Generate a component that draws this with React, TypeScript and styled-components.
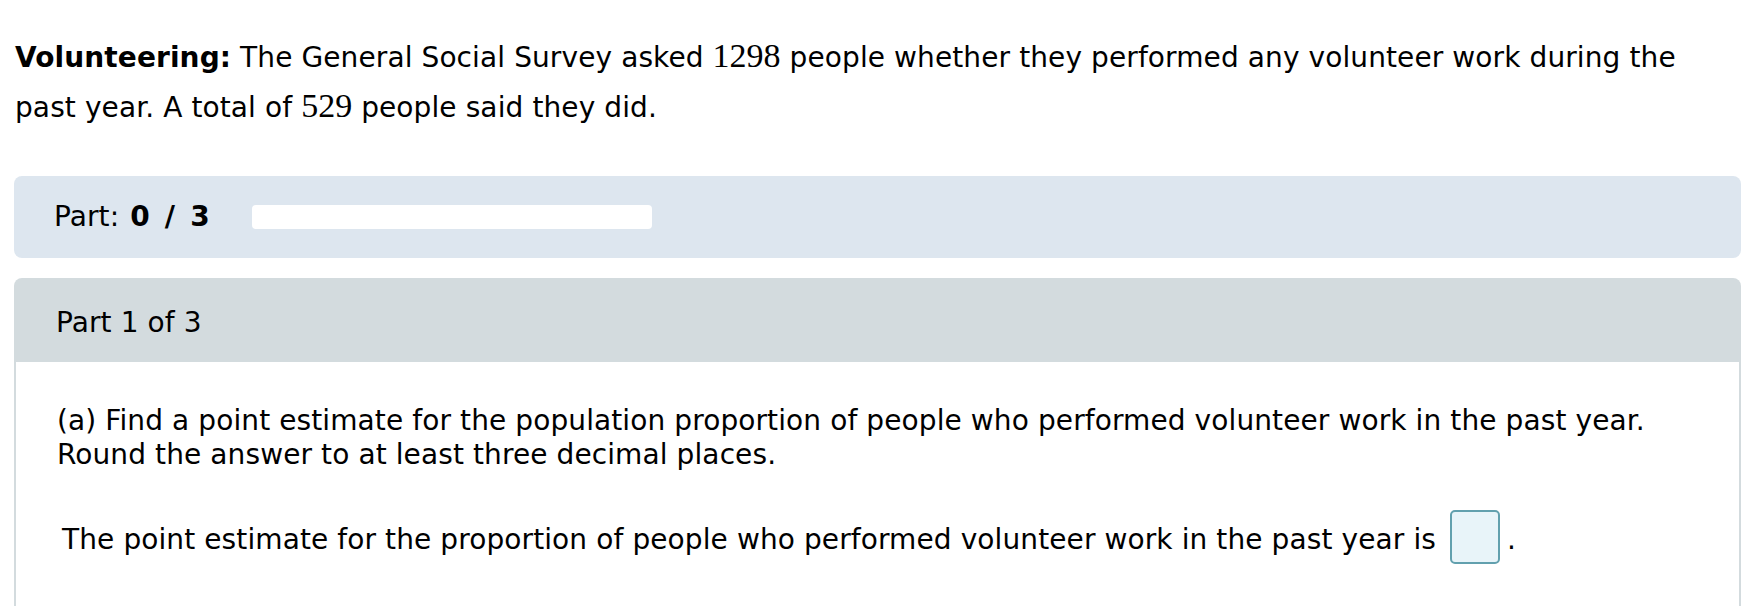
import React from "react";
import styled, { createGlobalStyle } from "styled-components";

const Global = createGlobalStyle`
  html, body { margin: 0; padding: 0; background: #ffffff; }
  body { font-family: "DejaVu Sans", Verdana, sans-serif; color: #000; letter-spacing: 0.1px; }
`;

const Page = styled.div`
  padding: 33px 17px 0 14px;
  font-size: 28px;
`;

const Intro = styled.p`
  margin: 0;
  line-height: 50px;
  padding-left: 1px;
`;

const Num = styled.span`
  font-family: "Liberation Serif", "Times New Roman", serif;
  font-size: 34px;
  line-height: 0;
  letter-spacing: 0;
`;

const ProgressPanel = styled.div`
  margin-top: 43px;
  height: 82px;
  background: #dde6ef;
  border-radius: 8px;
  display: flex;
  align-items: center;
  padding-left: 40px;
`;

const Label = styled.span`
  line-height: 1;
`;

const Score = styled.b`
  margin-left: 2px;
`;

const Slash = styled.span`
  margin: 0 15px;
`;

const Bar = styled.div`
  margin-left: 42px;
  width: 400px;
  height: 24px;
  background: #ffffff;
  border-radius: 4px;
`;

const PartCard = styled.section`
  margin-top: 20px;
`;

const PartHeader = styled.div`
  box-sizing: border-box;
  height: 84px;
  padding-top: 4px;
  background: #d3dbde;
  border-radius: 8px 8px 0 0;
  display: flex;
  align-items: center;
  padding-left: 42px;
`;

const PartBody = styled.div`
  border-left: 2px solid #d3dbde;
  border-right: 2px solid #d3dbde;
  padding: 42px 40px 60px 41px;
`;

const Question = styled.p`
  margin: 0;
  line-height: 34px;
`;

const AnswerRow = styled.div`
  margin-top: 38px;
  padding-left: 5px;
  display: flex;
  align-items: center;
  line-height: 34px;
`;

const AnswerText = styled.span`
  padding-top: 6px;
`;

const AnswerBox = styled.span`
  display: inline-block;
  box-sizing: border-box;
  width: 50px;
  height: 54px;
  margin: 0 7px 0 14px;
  background: #e8f4f9;
  border: 2px solid #62a0ae;
  border-radius: 5px;
`;

export default function App() {
  return (
    <>
      <Global />
      <Page>
        <Intro>
          <b>Volunteering:</b> The General Social Survey asked <Num>1298</Num> people whether they
          performed any volunteer work during the past year. A total of <Num>529</Num> people said
          they did.
        </Intro>
        <ProgressPanel>
          <Label>
            Part:{" "}
            <Score>
              0<Slash>/</Slash>3
            </Score>
          </Label>
          <Bar />
        </ProgressPanel>
        <PartCard>
          <PartHeader>Part 1 of 3</PartHeader>
          <PartBody>
            <Question>
              (a) Find a point estimate for the population proportion of people who performed
              volunteer work in the past year.
              <br />
              Round the answer to at least three decimal places.
            </Question>
            <AnswerRow>
              <AnswerText>
                The point estimate for the proportion of people who performed volunteer work in the past year is
              </AnswerText>
              <AnswerBox />
              <AnswerText>.</AnswerText>
            </AnswerRow>
          </PartBody>
        </PartCard>
      </Page>
    </>
  );
}
